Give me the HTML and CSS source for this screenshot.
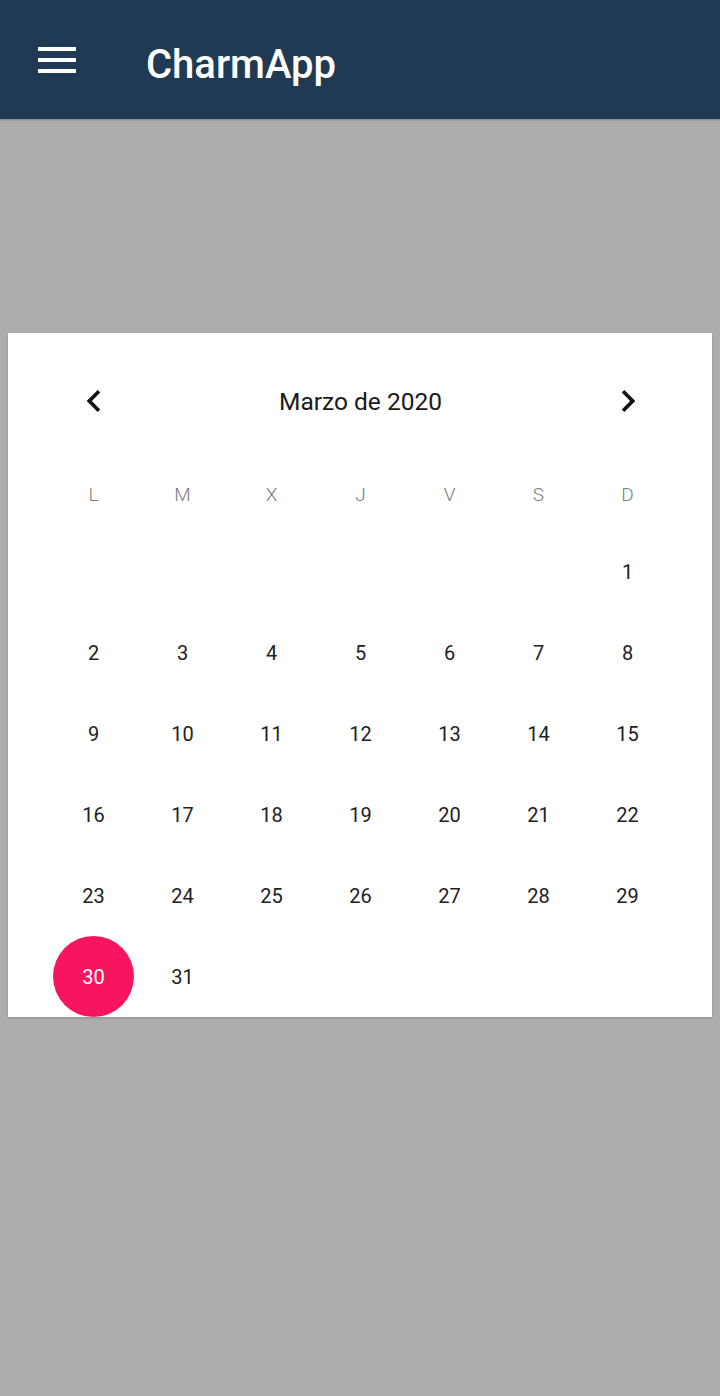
FILE: index.html
```html
<!DOCTYPE html>
<html lang="es">
<head>
<meta charset="utf-8">
<title>CharmApp</title>
<link rel="stylesheet" href="styles.css">
</head>
<body>
<header class="appbar">
  <button class="menu-btn" aria-label="Menú">
    <span class="bar"></span><span class="bar"></span><span class="bar"></span>
  </button>
  <h1 class="title">CharmApp</h1>
</header>
<main class="content">
  <section class="calendar">
    <div class="cal-head">
      <button class="nav-btn" aria-label="Anterior">
        <svg viewBox="0 0 24 24" width="44" height="44"><path d="M15.41 7.41L14 6l-6 6 6 6 1.41-1.41L10.83 12z"/></svg>
      </button>
      <div class="month">Marzo de 2020</div>
      <button class="nav-btn" aria-label="Siguiente">
        <svg viewBox="0 0 24 24" width="44" height="44"><path d="M10 6L8.59 7.41 13.17 12l-4.58 4.59L10 18l6-6z"/></svg>
      </button>
    </div>
    <div class="weekdays">
      <span>L</span><span>M</span><span>X</span><span>J</span><span>V</span><span>S</span><span>D</span>
    </div>
    <div class="days">
      <span></span><span></span><span></span><span></span><span></span><span></span><span class="day">1</span>
      <span class="day">2</span><span class="day">3</span><span class="day">4</span><span class="day">5</span><span class="day">6</span><span class="day">7</span><span class="day">8</span>
      <span class="day">9</span><span class="day">10</span><span class="day">11</span><span class="day">12</span><span class="day">13</span><span class="day">14</span><span class="day">15</span>
      <span class="day">16</span><span class="day">17</span><span class="day">18</span><span class="day">19</span><span class="day">20</span><span class="day">21</span><span class="day">22</span>
      <span class="day">23</span><span class="day">24</span><span class="day">25</span><span class="day">26</span><span class="day">27</span><span class="day">28</span><span class="day">29</span>
      <span class="day selected">30</span><span class="day">31</span>
    </div>
  </section>
</main>
</body>
</html>
```
FILE: styles.css
```css
* { box-sizing: border-box; }
html, body {
  margin: 0;
  padding: 0;
  height: 100%;
}
body {
  background: #adadad;
  font-family: Roboto, "Noto Sans", sans-serif;
  color: #212121;
}
.appbar {
  height: 119px;
  background: #1f3a52;
  display: flex;
  align-items: center;
  padding-left: 38px;
  box-shadow: 0 1px 2px rgba(0,0,0,0.25);
}
.menu-btn {
  width: 38px;
  height: 26px;
  padding: 0;
  border: 0;
  background: none;
  display: flex;
  flex-direction: column;
  justify-content: space-between;
}
.bar {
  display: block;
  width: 38px;
  height: 4px;
  background: #fff;
}
.title {
  margin: 0 0 0 70px;
  color: #fff;
  font-size: 40px;
  font-weight: 500;
  line-height: 1;
  padding-top: 10px;
}
.content {
  padding: 214px 8px 0;
}
.calendar {
  background: #fff;
  padding: 28px 40px 0 41px;
  height: 684px;
  box-shadow: 0 1px 2px rgba(0,0,0,0.2);
}
.cal-head {
  height: 80px;
  display: grid;
  grid-template-columns: 89px 1fr 89px;
  align-items: center;
}
.nav-btn {
  border: 0;
  background: none;
  padding: 0;
  display: flex;
  justify-content: center;
  align-items: center;
  height: 80px;
}
.nav-btn svg { fill: #111; }
.month {
  text-align: center;
  font-size: 24.5px;
  font-weight: 400;
  color: #1a1a1a;
}
.weekdays {
  margin-top: 33px;
  height: 40px;
  display: grid;
  grid-template-columns: repeat(7, 89px);
  align-items: center;
  justify-items: center;
  color: #7a7a7a;
  font-size: 19px;
  font-weight: 300;
}
.days {
  margin-top: 17px;
  display: grid;
  grid-template-columns: repeat(7, 89px);
  grid-auto-rows: 81px;
  justify-items: center;
  align-items: center;
  font-size: 20px;
}
.day {
  width: 81px;
  height: 81px;
  display: flex;
  align-items: center;
  justify-content: center;
  border-radius: 50%;
}
.selected {
  background: #f81560;
  color: #fff;
}
```
